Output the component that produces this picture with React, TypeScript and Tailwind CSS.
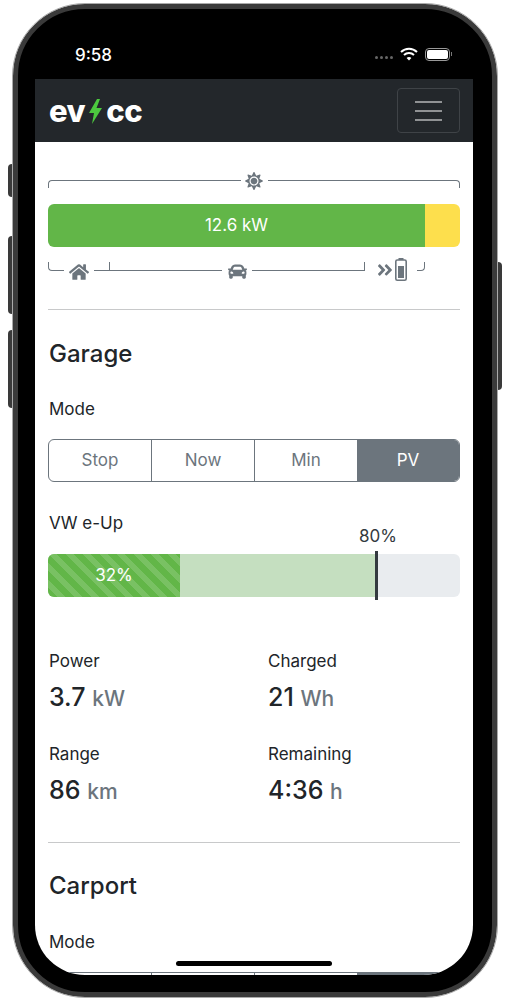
import { FaAngleDoubleRight, FaCar, FaHome, FaSun } from "react-icons/fa";

const modes = ["Stop", "Now", "Min", "PV"];

function ModeButtons({ active }: { active: string }) {
    return (
        <div className="flex h-[43px] w-[412px] shrink-0 overflow-hidden rounded-md border border-[#6c757d]">
            {modes.map((mode, i) => (
                <div
                    key={mode}
                    className={
                        mode === active
                            ? "flex flex-1 items-center justify-center bg-[#6c757d] pt-px text-white"
                            : i === 0
                              ? "flex flex-1 items-center justify-center pt-px text-[#6c757d]"
                              : "flex flex-1 items-center justify-center border-l border-[#6c757d] pt-px text-[#6c757d]"
                    }
                >
                    {mode}
                </div>
            ))}
        </div>
    );
}

function Stat({ label, value, unit }: { label: string; value: string; unit: string }) {
    return (
        <div className="pl-px">
            <div className="h-6 leading-[26px]">{label}</div>
            <div className="mt-[9px] h-8 text-[25px] font-medium leading-[33px]">
                {value} <span className="text-[21px] font-medium text-[#6c757d]">{unit}</span>
            </div>
        </div>
    );
}

function BatteryIcon() {
    return (
        <svg width="12" height="23" viewBox="0 0 12 23" fill="none">
            <rect x="3.5" y="0" width="5" height="2" fill="#6c757d" />
            <rect x="0.8" y="2" width="10.4" height="20.2" rx="1.5" stroke="#6c757d" strokeWidth="1.6" />
            <rect x="3" y="8" width="6" height="12" fill="#6c757d" />
        </svg>
    );
}

export default function App() {
    return (
        <div className="h-[1000px] w-[508px] overflow-hidden bg-white pl-[13px] pt-[4px] font-['Inter',sans-serif] text-[17px] text-[#212529]">
            <div className="relative h-[993px] w-[484px] rounded-[72px] border-[5px] border-[#3a3a3a] bg-black pl-[17px] pr-[19px] outline outline-1 outline-[#aaaaaa]">
                {/* side buttons */}
                <div className="absolute -left-[10px] top-[155px] h-[33px] w-[4px] rounded-l-sm bg-[#3a3a3a]" />
                <div className="absolute -left-[10px] top-[227px] h-[78px] w-[4px] rounded-l-sm bg-[#3a3a3a]" />
                <div className="absolute -left-[10px] top-[321px] h-[78px] w-[4px] rounded-l-sm bg-[#3a3a3a]" />
                <div className="absolute -right-[10px] top-[253px] h-[128px] w-[4px] rounded-r-sm bg-[#3a3a3a]" />

                {/* status bar */}
                <div className="flex h-[70px] items-start justify-between pl-[40px] pr-[21px] pt-[37px] text-white">
                    <div className="text-[17px] font-medium leading-[18px]">9:58</div>
                    <div className="flex items-center gap-[7px] pt-px">
                        <div className="mt-[6px] flex gap-[2px]">
                            <div className="size-[3px] rounded-full bg-[#666666]" />
                            <div className="size-[3px] rounded-full bg-[#666666]" />
                            <div className="size-[3px] rounded-full bg-[#666666]" />
                            <div className="size-[3px] rounded-full bg-[#666666]" />
                        </div>
                        <svg width="18" height="14" viewBox="0 0 18 14" fill="none" stroke="white" strokeWidth="2">
                            <path d="M1 5 C5.5 0.6 12.5 0.6 17 5" />
                            <path d="M4 8 C6.8 5.3 11.2 5.3 14 8" />
                            <path d="M9 13.5 L6.6 11 C7.9 9.8 10.1 9.8 11.4 11 Z" fill="white" stroke="none" />
                        </svg>
                        <div className="flex items-center gap-px">
                            <div className="h-[13px] w-[25px] rounded-[4px] border border-[#999999] p-px">
                                <div className="h-full w-full rounded-[2px] bg-white" />
                            </div>
                            <div className="h-1 w-px bg-[#777777]" />
                        </div>
                    </div>
                </div>

                {/* screen */}
                <div className="relative h-[896px] overflow-hidden rounded-b-[50px] bg-white">
                    <div className="flex h-[63px] items-center justify-between bg-[#23272b] pl-[14px] pr-[13px]">
                        <div className="-mt-px flex items-center text-[31px] font-extrabold leading-none tracking-[-0.015em] text-white">
                            <span>ev</span>
                            <svg width="13" height="25" viewBox="0 0 13 25" className="mx-[4px] mt-[2px]">
                                <polygon points="8,0 0,14 5,14 3,25 13,9 7.5,9 11,0" fill="#4cc93f" />
                            </svg>
                            <span>cc</span>
                        </div>
                        <div className="flex h-[45px] w-[63px] flex-col items-center justify-center gap-[7px] rounded border border-[#3f4347]">
                            <div className="h-[2px] w-[27px] bg-[#909294]" />
                            <div className="h-[2px] w-[27px] bg-[#909294]" />
                            <div className="h-[2px] w-[27px] bg-[#909294]" />
                        </div>
                    </div>

                    <div className="flex flex-col px-[13px] pt-[38px]">
                        {/* energy flow */}
                        <div className="flex h-6 w-[412px]">
                            <div className="h-2 flex-1 rounded-tl border-l border-t border-[#6c757d]" />
                            <div className="-mt-[8px] flex h-[18px] w-[27px] justify-center text-[#6c757d]">
                                <FaSun size={18} />
                            </div>
                            <div className="h-2 flex-1 rounded-tr border-r border-t border-[#6c757d]" />
                        </div>
                        <div className="flex h-[43px] w-[412px] overflow-hidden rounded-md">
                            <div className="flex w-[377px] items-center justify-center bg-[#62b648] pt-px text-white">12.6 kW</div>
                            <div className="flex-1 bg-[#fddf4d]" />
                        </div>
                        <div className="mt-[15px] flex h-4 text-[#6c757d]">
                            <div className="h-[9px] w-4 rounded-bl border-b border-l border-[#6c757d]" />
                            <div className="flex w-[30px] justify-center">
                                <FaHome size={20} />
                            </div>
                            <div className="h-[9px] w-[15px] border-b border-[#6c757d]" />
                            <div className="h-[9px] w-[113px] border-b border-l border-[#6c757d]" />
                            <div className="flex w-[30px] justify-center">
                                <FaCar size={19} />
                            </div>
                            <div className="h-[9px] w-[113px] border-b border-r border-[#6c757d]" />
                            <div className="flex w-[52px] items-start justify-end pr-[10px]">
                                <FaAngleDoubleRight size={18} className="-mr-px -mt-px" />
                                <div className="-mt-[4px] ml-[2px]">
                                    <BatteryIcon />
                                </div>
                            </div>
                            <div className="h-[9px] w-2 rounded-br border-b border-r border-[#6c757d]" />
                        </div>

                        <div className="mt-[31px] h-px w-[412px] bg-[#c8c9ca]" />

                        {/* Garage */}
                        <div className="mt-[29px] h-[29px] pl-px text-2xl font-medium leading-[29px]">Garage</div>
                        <div className="mt-[28px] h-6 pl-px leading-[26px]">Mode</div>
                        <div className="mt-[19px]">
                            <ModeButtons active="PV" />
                        </div>
                        <div className="mt-[29px] h-6 pl-px leading-6">VW e-Up</div>

                        <div className="relative mt-[19px] h-[43px] w-[412px] rounded-md bg-[#e9ecef]">
                            <div className="flex h-full w-[327px] overflow-hidden rounded-l-md bg-[#c5dfc0]">
                                <div className="flex w-[132px] items-center justify-center bg-[#62b648] bg-[linear-gradient(45deg,rgba(255,255,255,.15)_25%,transparent_25%,transparent_50%,rgba(255,255,255,.15)_50%,rgba(255,255,255,.15)_75%,transparent_75%,transparent)] bg-[length:17px_17px] text-white">
                                    32%
                                </div>
                            </div>
                            <div className="absolute -top-[3px] left-[327px] h-[49px] w-[3px] bg-[#343a40]" />
                            <div className="absolute -top-[30px] left-[301px] w-[58px] text-center leading-6 text-[#343a40]">80%</div>
                        </div>

                        <div className="mt-[51px] grid grid-cols-[219px_1fr] gap-y-[28px]">
                            <Stat label="Power" value="3.7" unit="kW" />
                            <Stat label="Charged" value="21" unit="Wh" />
                            <Stat label="Range" value="86" unit="km" />
                            <Stat label="Remaining" value="4:36" unit="h" />
                        </div>

                        <div className="mt-[36px] h-px w-[412px] bg-[#c8c9ca]" />

                        {/* Carport */}
                        <div className="mt-[29px] h-[29px] pl-px text-2xl font-medium leading-[27px]">Carport</div>
                        <div className="mt-[28px] h-6 pl-px leading-[26px]">Mode</div>
                        <div className="mt-[19px]">
                            <ModeButtons active="PV" />
                        </div>
                    </div>

                    <div className="absolute bottom-[9px] left-[141px] h-[5px] w-[156px] rounded-full bg-black" />
                </div>
            </div>
        </div>
    );
}
